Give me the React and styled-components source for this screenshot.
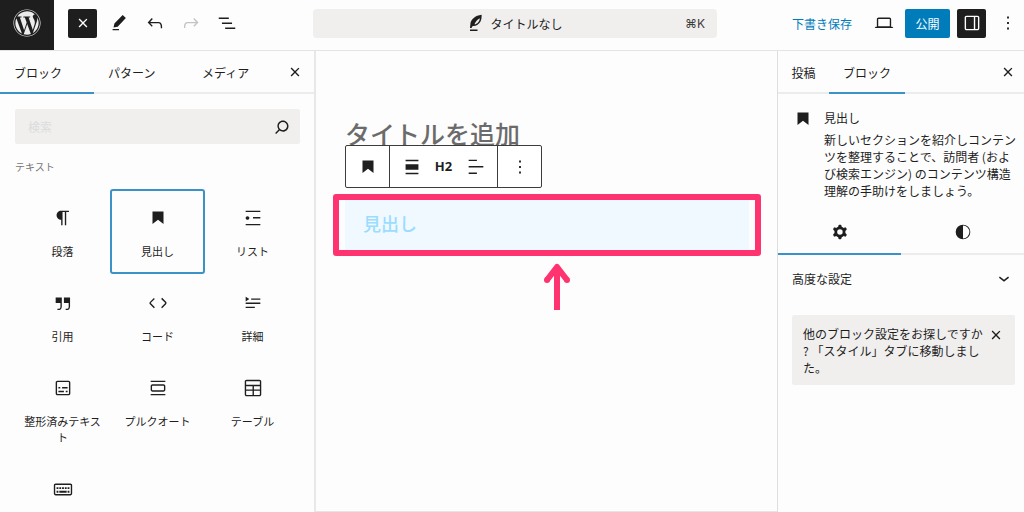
import React from "react";
import styled, { createGlobalStyle } from "styled-components";
import { FaWordpress } from "react-icons/fa";

const GlobalStyle = createGlobalStyle`
  * {
    box-sizing: border-box;
  }

  body {
    margin: 0;
    background: #fdfdfd;
    color: #1e1e1e;
    font-family: "Noto Sans CJK JP", sans-serif;
    font-size: 12px;
    line-height: 17px;
  }

  button,
  input {
    font: inherit;
    color: inherit;
  }

  p,
  h1,
  h2,
  h3 {
    margin: 0;
    font-weight: 400;
  }
`;

const paths = {
  close:
    "M12 13.06l3.712 3.713 1.061-1.06L13.061 12l3.712-3.712-1.06-1.06L12 10.938 8.288 7.227l-1.061 1.06L10.939 12l-3.712 3.712 1.06 1.061L12 13.061z",
  edit: "m19.500 6.500-3.500-3.300-9 9.300-1 4.500 4.500-1L19.500 6.500Zm-7.500 12H5V20h7v-1.500Z",
  undo: "M18.3 11.7c-.6-.6-1.4-.9-2.3-.9H6.7l2.9-3.3-1.1-1-4.5 5L8.5 16l1-1-2.7-2.7H16c.5 0 .9.2 1.3.5 1 1 1 3.4 1 4.5v.3h1.5v-.2c0-1.5 0-4.3-1.5-5.7z",
  redo: "M15.6 6.5l-1.1 1 2.9 3.3H8c-.9 0-1.7.3-2.3.9-1.4 1.5-1.4 4.2-1.4 5.6v.2h1.5v-.3c0-1.1 0-3.5 1-4.5.3-.3.7-.5 1.3-.5h9.2L14.5 15l1.1 1.1 4.6-4.6-4.6-5z",
  listView:
    "M3 6h11v1.5H3V6Zm3.5 5.5h11V13h-11v-1.5ZM21 17H10v1.5h11V17Z",
  post: "M19.500 1C11 2 5 7 4.500 13.500L4 18.500h2L7.500 16C12 16.500 16 13.500 18 10c1.500-3 1.500-6 1.500-9zM10 13.800c1-3.300 3.500-6 7-8.300 0 3.500-2.500 7.500-7 8.300zM4 20.800h10v2H4z",
  desktop:
    "M20.5 16h-.7V8c0-1.1-.9-2-2-2H6.2c-1.1 0-2 .9-2 2v8h-.7c-.8 0-1.500.7-1.500 1.500h20c0-.8-.7-1.500-1.500-1.500zM5.7 8c0-.3.2-.5.5-.5h11.6c.3 0 .5.2.5.5v7.600H5.700V8z",
  drawer:
    "M18 4H6c-1.1 0-2 .9-2 2v12c0 1.1.9 2 2 2h12c1.1 0 2-.9 2-2V6c0-1.1-.9-2-2-2zm-4 14.5H6c-.3 0-.5-.2-.5-.5V6c0-.3.2-.5.5-.5h8v13zm4.5-.5c0 .3-.2.5-.5.5h-2.5v-13H18c.3 0 .5.2.5.5v12z",
  more: "M13 19h-2v-2h2v2zm0-6h-2v-2h2v2zm0-6h-2V5h2v2z",
  search:
    "M13 5c-3.3 0-6 2.7-6 6 0 1.4.5 2.7 1.3 3.7l-3.8 3.8 1.1 1.1 3.8-3.8c1 .8 2.3 1.3 3.7 1.3 3.3 0 6-2.7 6-6S16.3 5 13 5zm0 10.5c-2.5 0-4.5-2-4.5-4.5s2-4.5 4.5-4.5 4.5 2 4.5 4.5-2 4.5-4.5 4.5z",
  paragraph:
    "m9.996 14v-.225l.004 0v6.225h1.5v-14.5h2.5v14.500h1.500v-14.500h3v-1.500h-8.504c-2.761 0-5 2.239-5 5 0 2.761 2.239 5 5 5z",
  heading: "M6 5V18.591L12 13.847L18 18.591V5H6Z",
  list: "M4 4v1.5h16V4H4zm8 8.5h8V11h-8v1.5zM4 20h16v-1.5H4V20zm4-8c0-1.1-.9-2-2-2s-2 .9-2 2 .9 2 2 2 2-.9 2-2z",
  quote:
    "M13 6v6h5.2v4c0 .8-.2 1.4-.5 1.7-.6.6-1.6.6-2.5.5h-.3v1.5h.5c1 0 2.3-.1 3.3-1 .6-.6 1-1.6 1-2.8V6H13zm-9 6h5.2v4c0 .8-.2 1.4-.5 1.7-.6.6-1.6.6-2.5.5h-.3v1.5h.5c1 0 2.3-.1 3.3-1 .6-.6 1-1.6 1-2.8V6H4v6z",
  code: "M20.8 10.7l-4.3-4.3-1.1 1.1 4.3 4.3c.1.1.1.3 0 .4l-4.3 4.3 1.1 1.1 4.3-4.3c.7-.8.7-1.9 0-2.6zM4.2 11.8l4.3-4.3-1-1-4.3 4.3c-.7.7-.7 1.8 0 2.5l4.3 4.3 1.1-1.1-4.3-4.3c-.2-.1-.2-.3-.1-.4z",
  details:
    "M4 16h10v1.5H4V16Zm0-4.5h16V13H4v-1.5ZM10 7h10v1.5H10V7ZM4 5.250l4 2.500-4 2.500v-5Z",
  preformatted:
    "M18 4H6c-1.1 0-2 .9-2 2v12c0 1.1.9 2 2 2h12c1.1 0 2-.9 2-2V6c0-1.1-.9-2-2-2zm.5 14c0 .3-.2.5-.5.5H6c-.3 0-.5-.2-.5-.5V6c0-.3.2-.5.5-.5h12c.3 0 .5.2.5.5v12zM7 16.5h6V15H7v1.5zm4-4h6V11h-6v1.5zM9 11H7v1.5h2V11zm6 5.500h2V15h-2v1.500z",
  pullquote:
    "M18 8H6c-1.1 0-2 .9-2 2v4c0 1.1.9 2 2 2h12c1.1 0 2-.9 2-2v-4c0-1.1-.9-2-2-2zm.5 6c0 .3-.2.5-.5.5H6c-.3 0-.5-.2-.5-.5v-4c0-.3.2-.5.5-.5h12c.3 0 .5.2.5.5v4zM4 4v1.5h16V4H4zm0 16h16v-1.5H4V20z",
  table:
    "M19 3H5c-1.1 0-2 .9-2 2v14c0 1.1.9 2 2 2h14c1.1 0 2-.9 2-2V5c0-1.1-.9-2-2-2zM5 4.5h14c.3 0 .5.2.5.5v3.5h-15V5c0-.3.2-.5.5-.5zm8 5.5h6.5v3.5H13V10zm-1.5 3.5h-7V10h7v3.5zm-7 5.5v-4h7v4.5H5c-.3 0-.5-.2-.5-.5zm14.500.5h-6V15h6.500v4c0 .3-.2.5-.5.5z",
  classic:
    "M20 6H4c-1.1 0-2 .9-2 2v9c0 1.1.9 2 2 2h16c1.1 0 2-.9 2-2V8c0-1.1-.9-2-2-2zm.5 11c0 .3-.2.5-.5.5H4c-.3 0-.5-.2-.5-.5V8c0-.3.2-.5.5-.5h16c.3 0 .5.2.5.5v9zM10 10H8v2h2v-2zm-5 2h2v-2H5v2zm8-2h-2v2h2v-2zm-5 6h8v-2H8v2zm6-4h2v-2h-2v2zm3 0h2v-2h-2v2zm0 4h2v-2h-2v2zM5 16h2v-2H5v2z",
  alignBlock:
    "M5 15h14V9H5v6zm0 4.8h14v-1.5H5v1.5zM5 4.2v1.5h14V4.2H5z",
  alignText: "M13 5.5H4V4h9v1.5Zm7 7H4V11h16v1.5Zm-7 7H4V18h9v1.5Z",
  cog: "M10.289 4.836A1 1 0 0111.275 4h1.306a1 1 0 01.987.836l.244 1.466c.787.26 1.503.679 2.108 1.218l1.393-.522a1 1 0 011.216.437l.653 1.13a1 1 0 01-.23 1.273l-1.148.944a6.025 6.025 0 010 2.435l1.149.946a1 1 0 01.23 1.272l-.653 1.13a1 1 0 01-1.216.437l-1.394-.522c-.605.54-1.32.958-2.108 1.218l-.244 1.466a1 1 0 01-.987.836h-1.306a1 1 0 01-.986-.836l-.244-1.466a5.995 5.995 0 01-2.108-1.218l-1.394.522a1 1 0 01-1.217-.436l-.653-1.131a1 1 0 01.23-1.272l1.149-.946a6.026 6.026 0 010-2.435l-1.148-.944a1 1 0 01-.23-1.272l.653-1.131a1 1 0 011.217-.437l1.393.522a5.994 5.994 0 012.108-1.218l.244-1.466zM14.929 12a3 3 0 11-6 0 3 3 0 016 0z",
  styles:
    "M20 12a8 8 0 1 1-16 0 8 8 0 0 1 16 0Zm-1 0a7 7 0 0 1-7 7v-14a7 7 0 0 1 7 7Z",
  chevron: "M17.5 11.6L12 16l-5.5-4.4.9-1.2L12 14l4.5-3.6 1 1.2z",
};

const Icon = ({ name, size = 22 }) => (
  <svg
    width={size}
    height={size}
    viewBox="0 0 24 24"
    fill="currentColor"
    fillRule="evenodd"
    aria-hidden="true"
  >
    <path d={paths[name]} />
  </svg>
);

const Editor = styled.div`
  display: flex;
  flex-direction: column;
  height: 100vh;
`;

const Header = styled.header`
  display: flex;
  align-items: center;
  flex: none;
  height: 51px;
  border-bottom: 1px solid #e4e4e4;
`;

const HeaderStart = styled.div`
  display: flex;
  align-items: center;
  width: 313px;
  height: 100%;
`;

const Logo = styled.a`
  display: flex;
  align-items: center;
  justify-content: center;
  width: 54px;
  height: 100%;
  padding-bottom: 4px;
  background: #1e1e1e;
  color: #ececec;
`;

const Tools = styled.div`
  display: flex;
  gap: 7px;
  padding: 0 0 4px 14px;
`;

const IconButton = styled.button`
  display: flex;
  align-items: center;
  justify-content: center;
  width: 29px;
  height: 29px;
  padding: 0;
  border: 0;
  border-radius: 2px;
  background: ${(props) => (props.$dark ? "#1e1e1e" : "transparent")};
  color: ${(props) => (props.$dark ? "#fff" : "#1e1e1e")};

  &:disabled {
    color: #c4c4c4;
  }
`;

const DocumentBar = styled.button`
  display: grid;
  grid-template-columns: 1fr auto 1fr;
  align-items: center;
  flex: 1;
  height: 29px;
  margin-bottom: 4px;
  padding: 0 12px;
  border: 0;
  border-radius: 4px;
  background: #f0efee;
`;

const DocumentTitle = styled.span`
  display: flex;
  grid-column: 2;
  align-items: center;
  gap: 5px;
`;

const Shortcut = styled.span`
  color: #3c3c3c;
  font-family: Inter, "DejaVu Sans", sans-serif;
  text-align: right;
`;

const HeaderEnd = styled.div`
  display: flex;
  align-items: center;
  justify-content: flex-end;
  gap: 7px;
  width: 307px;
  padding: 0 2px 4px 0;
`;

const SaveButton = styled.button`
  padding: 0 10px;
  border: 0;
  background: none;
  color: #007cba;
`;

const PublishButton = styled.button`
  width: 45px;
  height: 29px;
  padding: 0;
  border: 0;
  border-radius: 2px;
  background: #007cba;
  color: #fff;
`;

const Body = styled.div`
  display: flex;
  flex: 1;
  min-height: 0;
`;

const Inserter = styled.aside`
  flex: none;
  width: 316px;
  overflow: auto;
  scrollbar-width: none;
  border-right: 2px solid #e8e8e8;
`;

const Tabs = styled.div`
  display: flex;
  height: 43px;
  padding-right: ${(props) => props.$end};
  border-bottom: 2px solid #ececec;
`;

const Tab = styled.button`
  flex: ${(props) => (props.$width ? "none" : "1")};
  width: ${(props) => props.$width};
  height: 43px;
  padding: 2px 0 0 ${(props) => props.$indent || "0"};
  border: 0;
  border-bottom: 2px solid
    ${(props) => (props["aria-selected"] ? "#3a92c9" : "transparent")};
  background: none;
  text-align: ${(props) => (props.$indent ? "left" : "center")};
`;

const TabsClose = styled(IconButton)`
  align-self: center;
  margin-left: auto;
`;

const InserterContent = styled.div`
  padding: 15px 14px 0 15px;
`;

const SearchBox = styled.div`
  display: flex;
  align-items: center;
  height: 35px;
  padding: 0 4px 0 13px;
  border-radius: 2px;
  background: #f0efee;
`;

const SearchInput = styled.input`
  flex: 1;
  min-width: 0;
  padding: 0;
  border: 0;
  outline: 0;
  background: none;

  &::placeholder {
    color: #dcdcdc;
  }
`;

const Category = styled.h2`
  margin: 14px 0;
  color: #757575;
  font-size: 10px;
`;

const BlockGrid = styled.div`
  display: grid;
  grid-template-columns: repeat(3, 1fr);
`;

const BlockItem = styled.button`
  display: flex;
  flex-direction: column;
  align-items: center;
  gap: 14px;
  padding: 16px 5px 13px;
  border: 2px solid ${(props) => (props.$active ? "#3a92c9" : "transparent")};
  border-radius: 3px;
  background: none;
  font-size: 11px;
  line-height: 16px;
`;

const Canvas = styled.main`
  flex: 1;
  min-width: 0;
  padding: 64px 28px 0 29px;
  border-bottom: 1px solid #e4e4e4;
`;

const PostTitle = styled.h1`
  color: #6b6b6b;
  font-size: 25px;
  font-weight: 500;
  line-height: 36px;
`;

const HeadingBlock = styled.div`
  position: relative;
  margin-top: 49px;
  padding: 6px 18px 10px;
  background: #eff9ff;
`;

const HeadingText = styled.h2`
  color: #9bdcff;
  font-size: 18px;
  font-weight: 500;
  line-height: 34px;
`;

const BlockToolbar = styled.div`
  position: absolute;
  bottom: calc(100% + 12px);
  left: 0;
  display: flex;
  height: 43px;
  border: 1px solid #3c3c3c;
  border-radius: 2px;
  background: #fff;
`;

const ToolbarGroup = styled.div`
  display: flex;
  align-items: center;
  gap: 3px;
  padding: 0 7px;

  & + & {
    border-left: 1px solid #3c3c3c;
  }
`;

const LevelButton = styled(IconButton)`
  font-family: "Open Sans", sans-serif;
  font-size: 13px;
  font-weight: 700;
`;

const Highlight = styled.div`
  position: absolute;
  inset: -6px -12px;
  border: 6px solid #ff3370;
  border-radius: 3px;
`;

const Arrow = styled.svg`
  position: absolute;
  top: calc(100% + 13px);
  left: 49%;
`;

const Settings = styled.aside`
  flex: none;
  width: 247px;
  border-left: 1px solid #dedede;
`;

const BlockCard = styled.div`
  display: flex;
  gap: 10px;
  padding: 14px 7px 13px 14px;
`;

const CardTitle = styled.h2`
  margin: 1px 0 5px;
  font-size: 12px;
`;

const CardText = styled.p`
  white-space: pre-line;
`;

const Panel = styled.button`
  display: flex;
  align-items: center;
  justify-content: space-between;
  width: 100%;
  height: 46px;
  padding: 0 9px 0 14px;
  border: 0;
  background: none;
`;

const Notice = styled.div`
  display: flex;
  justify-content: space-between;
  margin: 14px 9px 0 14px;
  padding: 10px 5px 9px 11px;
  border-radius: 2px;
  background: #f0efee;
`;

const NoticeText = styled.p`
  white-space: pre;
`;

const NoticeClose = styled(IconButton)`
  height: 19px;
`;

const blocks = [
  { icon: "paragraph", label: "段落" },
  { icon: "heading", label: "見出し", active: true },
  { icon: "list", label: "リスト" },
  { icon: "quote", label: "引用" },
  { icon: "code", label: "コード" },
  { icon: "details", label: "詳細" },
  { icon: "preformatted", label: "整形済みテキスト" },
  { icon: "pullquote", label: "プルクオート" },
  { icon: "table", label: "テーブル" },
  { icon: "classic", label: "クラシック" },
];

const EditorHeader = () => (
  <Header>
    <HeaderStart>
      <Logo href="#" aria-label="WordPress">
        <FaWordpress size={28} />
      </Logo>
      <Tools>
        <IconButton $dark aria-label="ブロック挿入ツール">
          <Icon name="close" />
        </IconButton>
        <IconButton aria-label="編集">
          <Icon name="edit" />
        </IconButton>
        <IconButton aria-label="元に戻す">
          <Icon name="undo" />
        </IconButton>
        <IconButton aria-label="やり直す" disabled>
          <Icon name="redo" />
        </IconButton>
        <IconButton aria-label="リスト表示">
          <Icon name="listView" />
        </IconButton>
      </Tools>
    </HeaderStart>
    <DocumentBar>
      <DocumentTitle>
        <Icon name="post" size={18} />
        タイトルなし
      </DocumentTitle>
      <Shortcut>⌘K</Shortcut>
    </DocumentBar>
    <HeaderEnd>
      <SaveButton>下書き保存</SaveButton>
      <IconButton aria-label="表示">
        <Icon name="desktop" />
      </IconButton>
      <PublishButton>公開</PublishButton>
      <IconButton $dark aria-label="設定">
        <Icon name="drawer" />
      </IconButton>
      <IconButton aria-label="オプション">
        <Icon name="more" />
      </IconButton>
    </HeaderEnd>
  </Header>
);

const BlockInserter = () => (
  <Inserter>
    <Tabs role="tablist" $end="7px">
      <Tab role="tab" aria-selected={true} $width="94px" $indent="14px">
        ブロック
      </Tab>
      <Tab role="tab" $width="94px" $indent="14px">
        パターン
      </Tab>
      <Tab role="tab" $width="94px" $indent="14px">
        メディア
      </Tab>
      <TabsClose aria-label="閉じる">
        <Icon name="close" />
      </TabsClose>
    </Tabs>
    <InserterContent>
      <SearchBox>
        <SearchInput type="search" aria-label="検索" placeholder="検索" />
        <IconButton aria-label="検索する">
          <Icon name="search" />
        </IconButton>
      </SearchBox>
      <Category>テキスト</Category>
      <BlockGrid>
        {blocks.map((block) => (
          <BlockItem key={block.icon} $active={block.active}>
            <Icon name={block.icon} />
            {block.label}
          </BlockItem>
        ))}
      </BlockGrid>
    </InserterContent>
  </Inserter>
);

const EditorCanvas = () => (
  <Canvas>
    <PostTitle>タイトルを追加</PostTitle>
    <HeadingBlock>
      <HeadingText>見出し</HeadingText>
      <Highlight />
      <BlockToolbar role="toolbar">
        <ToolbarGroup>
          <IconButton aria-label="見出し">
            <Icon name="heading" />
          </IconButton>
        </ToolbarGroup>
        <ToolbarGroup>
          <IconButton aria-label="配置">
            <Icon name="alignBlock" />
          </IconButton>
          <LevelButton>H2</LevelButton>
          <IconButton aria-label="テキストの配置">
            <Icon name="alignText" />
          </IconButton>
        </ToolbarGroup>
        <ToolbarGroup>
          <IconButton aria-label="オプション">
            <Icon name="more" />
          </IconButton>
        </ToolbarGroup>
      </BlockToolbar>
      <Arrow width="28" height="48" viewBox="0 0 28 48" aria-hidden="true">
        <path
          d="M14 47V5M4 17L14 4L24 17"
          fill="none"
          stroke="#ff3370"
          strokeWidth="6"
          strokeLinejoin="round"
        />
        <circle cx="4" cy="17" r="3" fill="#ff3370" />
        <circle cx="24" cy="17" r="3" fill="#ff3370" />
      </Arrow>
    </HeadingBlock>
  </Canvas>
);

const SettingsSidebar = () => (
  <Settings>
    <Tabs role="tablist" $end="2px">
      <Tab role="tab" $width="51px">
        投稿
      </Tab>
      <Tab role="tab" aria-selected={true} $width="76px">
        ブロック
      </Tab>
      <TabsClose aria-label="設定を閉じる">
        <Icon name="close" />
      </TabsClose>
    </Tabs>
    <BlockCard>
      <Icon name="heading" />
      <div>
        <CardTitle>見出し</CardTitle>
        <CardText>
          {
            "新しいセクションを紹介しコンテン\nツを整理することで、訪問者 (およ\nび検索エンジン) のコンテンツ構造\n理解の手助けをしましょう。"
          }
        </CardText>
      </div>
    </BlockCard>
    <Tabs role="tablist" $end="0">
      <Tab role="tab" aria-selected={true} aria-label="設定">
        <Icon name="cog" />
      </Tab>
      <Tab role="tab" aria-label="スタイル">
        <Icon name="styles" />
      </Tab>
    </Tabs>
    <Panel aria-expanded={false}>
      高度な設定
      <Icon name="chevron" />
    </Panel>
    <Notice>
      <NoticeText>
        {
          "他のブロック設定をお探しですか\n? 「スタイル」タブに移動しまし\nた。"
        }
      </NoticeText>
      <NoticeClose aria-label="通知を閉じる">
        <Icon name="close" />
      </NoticeClose>
    </Notice>
  </Settings>
);

const App = () => (
  <>
    <GlobalStyle />
    <Editor>
      <EditorHeader />
      <Body>
        <BlockInserter />
        <EditorCanvas />
        <SettingsSidebar />
      </Body>
    </Editor>
  </>
);

export default App;
